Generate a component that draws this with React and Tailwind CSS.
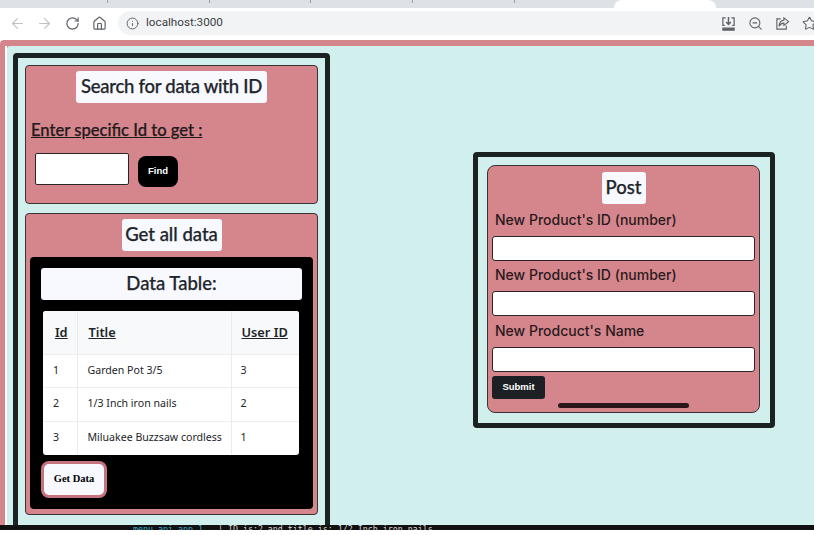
import { ArrowLeft, ArrowRight, RotateCw, House, Info, ZoomOut, Star } from 'lucide-react';

const products = [
  { id: 1, title: 'Garden Pot 3/5', userId: 3 },
  { id: 2, title: '1/3 Inch iron nails', userId: 2 },
  { id: 3, title: 'Miluakee Buzzsaw cordless', userId: 1 },
];

const Heading = ({ children, className = '' }) => (
  <h2 className={`bg-[#f8f8ff] rounded-[3px] h-8 flex items-center justify-center whitespace-nowrap text-[#212529] text-[18.5px] font-medium [-webkit-text-stroke:0.25px] font-['Lato',sans-serif] ${className}`}>
    {children}
  </h2>
);

const BrowserBar = () => (
  <div className="shrink-0">
    <div className="h-2 bg-[#dee1e6] flex">
      <div className="w-[614px] flex">
        <div className="w-[108px] h-[3px] border-r border-[#9aa0a6]" />
        <div className="w-[102px] h-[3px] border-r border-[#9aa0a6]" />
        <div className="w-[101px] h-[3px] border-r border-[#9aa0a6]" />
        <div className="w-[102px] h-[3px] border-r border-[#9aa0a6]" />
        <div className="w-[102px] h-[3px] border-r border-[#9aa0a6]" />
      </div>
      <div className="w-[102px] bg-white rounded-t-lg" />
    </div>
    <div className="h-[30px] bg-white flex items-center pl-[9px] text-[#5f6368] overflow-hidden">
      <ArrowLeft className="w-[17px] h-[17px] shrink-0 text-[#bfc2c6]" strokeWidth={1.6} />
      <ArrowRight className="w-[17px] h-[17px] shrink-0 ml-[10px] text-[#bfc2c6]" strokeWidth={1.6} />
      <RotateCw className="w-[15px] h-[15px] shrink-0 ml-[12px]" strokeWidth={1.9} />
      <House className="w-[15px] h-[15px] shrink-0 ml-3" strokeWidth={1.9} />
      <div className="ml-[11px] w-[700px] shrink-0 h-[24px] bg-[#f1f3f4] rounded-l-full flex items-center pl-[8px] pr-px">
        <Info className="w-[13px] h-[13px]" strokeWidth={1.8} />
        <span className="ml-[7px] text-[11.7px] text-[#3c4043] font-['Roboto',sans-serif]">localhost:3000</span>
        <div className="ml-auto flex items-center gap-[12px]">
          <svg viewBox="0 0 16 16" className="w-[15px] h-[15px]" fill="none" stroke="currentColor" strokeWidth="1.3">
            <path d="M5 2H2v8h2M11 2h3v8h-2" />
            <path d="M8 1v8M5.5 6.5 8 9l2.5-2.5" strokeWidth="1.6" />
            <path d="M2 13h12v2H2z" fill="currentColor" />
          </svg>
          <ZoomOut className="w-[15px] h-[15px]" strokeWidth={1.7} />
          <svg viewBox="0 0 16 16" className="w-[15px] h-[15px]" fill="none" stroke="currentColor" strokeWidth="1.2">
            <path d="M6 3H2v11h10v-4" />
            <path d="M9.5 2 14.5 6 9.5 10V7.6C7 7.6 5.5 8.6 4.5 11 4.6 7.4 6.4 4.8 9.5 4.4z" />
          </svg>
          <Star className="w-[15px] h-[15px]" strokeWidth={1.7} />
        </div>
      </div>
    </div>
  </div>
);

const SearchCard = () => (
  <section className="h-[139px] bg-[#d5868c] border border-[#3b3436] rounded-[4px] px-[4px] pt-[5px] flex flex-col mb-[9px]">
    <Heading className="w-[191px] self-center tracking-[-0.27px]">Search for data with ID</Heading>
    <p className="mt-[16px] pl-px text-[16.6px] leading-[22px] font-medium underline [-webkit-text-stroke:0.25px] text-[#241a1c] font-['Lato',sans-serif]">Enter specific Id to get :</p>
    <div className="flex items-start mt-[12px] ml-[5px]">
      <input className="w-[94px] h-[32px] bg-white border border-[#2b2526] rounded-[2px]" />
      <button className="ml-[9px] mt-[3px] w-10 h-[31px] bg-black text-white rounded-lg text-[9.5px] font-bold font-['Liberation_Sans',sans-serif]">Find</button>
    </div>
  </section>
);

const DataTable = () => (
  <table className="ml-[2px] w-[256px] table-fixed border-collapse bg-white rounded-[3px] overflow-hidden font-['Noto_Sans',sans-serif] text-[10.6px] text-[#212529]">
    <thead>
      <tr className="h-[43px] bg-[#f8f9fa] text-[12.8px]">
        <th className="w-[34px] border-r border-[#e9ecef] text-center font-semibold underline pl-[3px]">Id</th>
        <th className="w-[154px] border-r border-[#e9ecef] text-left pl-[11px] font-semibold underline">Title</th>
        <th className="text-left pl-[10px] font-semibold underline">User ID</th>
      </tr>
    </thead>
    <tbody>
      {products.map((p) => (
        <tr key={p.id} className="h-[33.6px] border-t border-[#eceef0]">
          <td className="border-r border-[#e9ecef] pl-[10px]">{p.id}</td>
          <td className="border-r border-[#e9ecef] pl-[10px]">{p.title}</td>
          <td className="pl-[9px]">{p.userId}</td>
        </tr>
      ))}
    </tbody>
  </table>
);

const AllDataCard = () => (
  <section className="h-[302px] bg-[#d5868c] border border-[#3b3436] rounded-[4px] px-[4px] pt-[5px] flex flex-col">
    <Heading className="w-[100px] self-center">Get all data</Heading>
    <div className="mt-[6px] h-[252px] bg-black rounded-[4px] px-[11px] pt-[11px]">
      <Heading className="mb-[11px]">Data Table:</Heading>
      <DataTable />
      <button className="block mt-[6px] w-[66px] h-[37px] bg-[#f8f8ff] border-[3px] border-[#c5747f] rounded-lg text-[10.5px] font-bold text-black font-['Liberation_Serif',serif]">Get Data</button>
    </div>
  </section>
);

const PostField = ({ label, className = '' }) => (
  <div className={className}>
    <label className="block pl-[3px] mb-[7px] text-[14px] leading-[18px] font-medium text-[#2b1a1d] font-['Inter',sans-serif]">{label}</label>
    <input className="block w-[263px] h-[25px] bg-white border border-[#2b2526] rounded-[3px]" />
  </div>
);

const PostCard = () => (
  <div className="ml-[143px] mt-[99px] w-[302px] h-[276px] border-[5px] border-[#1a2222] rounded-[4px] p-[8px] pl-[9px]">
    <section className="w-[273px] h-[248px] bg-[#d5868c] border border-[#3b3436] rounded-lg px-[4px] pt-[6px] flex flex-col">
      <Heading className="w-[44px] self-center mb-[7px]">Post</Heading>
      <PostField label="New Product's ID (number)" />
      <PostField label="New Product's ID (number)" className="mt-[5px]" />
      <PostField label="New Prodcuct's Name" className="mt-[6px]" />
      <button className="mt-[4px] w-[53px] h-[23px] bg-[#1c1f23] text-white rounded-[3px] text-[9.5px] font-bold font-['Liberation_Sans',sans-serif]">Submit</button>
      <div className="mt-[4px] self-center w-[131px] h-[5px] bg-[#2a1519] rounded-full" />
    </section>
  </div>
);

export default function App() {
  return (
    <div className="w-[814px] h-[535px] bg-white overflow-hidden flex flex-col">
      <BrowserBar />
      <main className="mt-[2px] h-[485px] shrink-0 bg-[#d5868c] rounded-tl-[4px] pl-[5px] pt-[6px] overflow-hidden">
        <div className="h-[479px] border-l-2 border-white">
          <div className="h-full bg-[#d1efed] rounded-tl-[3px] pl-[6px] pt-[7px] flex items-start">
            <div className="w-[317px] h-[490px] shrink-0 border-[5px] border-[#1a2222] rounded-[4px] p-[7px]">
              <SearchCard />
              <AllDataCard />
            </div>
            <PostCard />
          </div>
        </div>
      </main>
      <div className="h-[5px] shrink-0 bg-[#111] overflow-hidden pl-[133px] font-['DejaVu_Sans_Mono',monospace] text-[8.3px] leading-[9px] text-[#d4d4d4] whitespace-pre">
        <span className="text-[#3fa7c4]">menu_api_app_1</span>   | ID is:2 and title is: 1/2 Inch iron nails
      </div>
    </div>
  );
}
